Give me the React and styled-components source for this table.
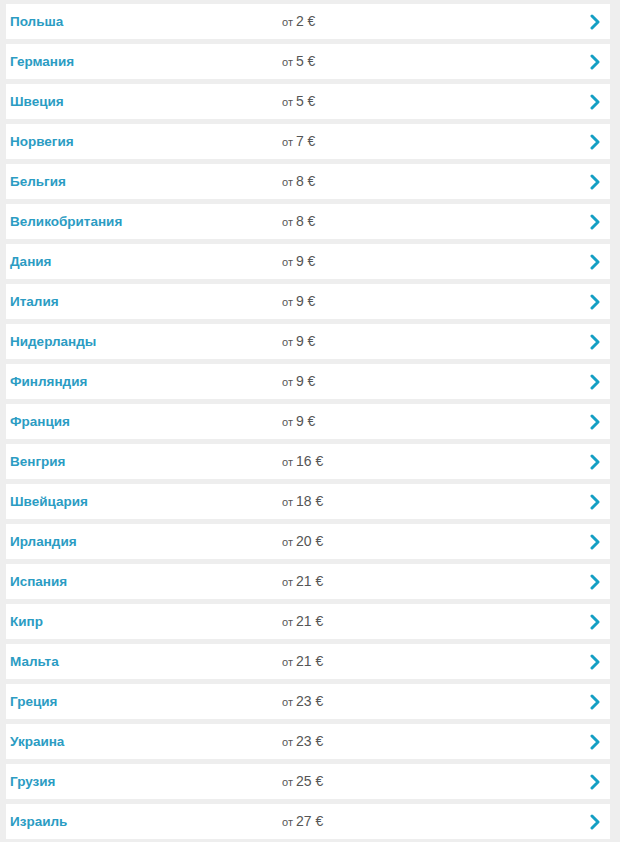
import React from "react";
import styled, { createGlobalStyle } from "styled-components";

const countries = [
  ["Польша", 2],
  ["Германия", 5],
  ["Швеция", 5],
  ["Норвегия", 7],
  ["Бельгия", 8],
  ["Великобритания", 8],
  ["Дания", 9],
  ["Италия", 9],
  ["Нидерланды", 9],
  ["Финляндия", 9],
  ["Франция", 9],
  ["Венгрия", 16],
  ["Швейцария", 18],
  ["Ирландия", 20],
  ["Испания", 21],
  ["Кипр", 21],
  ["Мальта", 21],
  ["Греция", 23],
  ["Украина", 23],
  ["Грузия", 25],
  ["Израиль", 27],
];

const GlobalStyle = createGlobalStyle`
  body {
    margin: 0;
    background: #eeeeee;
    font-family: "Liberation Sans", Arial, sans-serif;
  }
`;

const List = styled.ul`
  list-style: none;
  margin: 0;
  padding: 4px 10px 3px 6px;
  display: flex;
  flex-direction: column;
  gap: 5px;
`;

const Row = styled.li`
  height: 35px;
  background: #fff;
  display: grid;
  grid-template-columns: 272px 1fr auto;
  align-items: center;
  padding: 0 10px 0 4px;
  cursor: pointer;
`;

const Name = styled.span`
  font-size: 13.5px;
  font-weight: bold;
  color: #2b9cc3;
  margin-top: -1px;
`;

const Price = styled.span`
  color: #555;
  font-size: 14px;
  margin-top: -1px;

  small {
    font-size: 11px;
    margin-right: 3px;
  }
`;

const Chevron = () => (
  <svg width="10" height="16" viewBox="0 0 10 16">
    <polyline
      points="2,2 8,8 2,14"
      fill="none"
      stroke="#149fc4"
      strokeWidth="3"
      strokeLinecap="round"
      strokeLinejoin="round"
    />
  </svg>
);

export default function App() {
  return (
    <>
      <GlobalStyle />
      <List>
        {countries.map(([name, price]) => (
          <Row key={name}>
            <Name>{name}</Name>
            <Price>
              <small>от</small>
              {price} €
            </Price>
            <Chevron />
          </Row>
        ))}
      </List>
    </>
  );
}
